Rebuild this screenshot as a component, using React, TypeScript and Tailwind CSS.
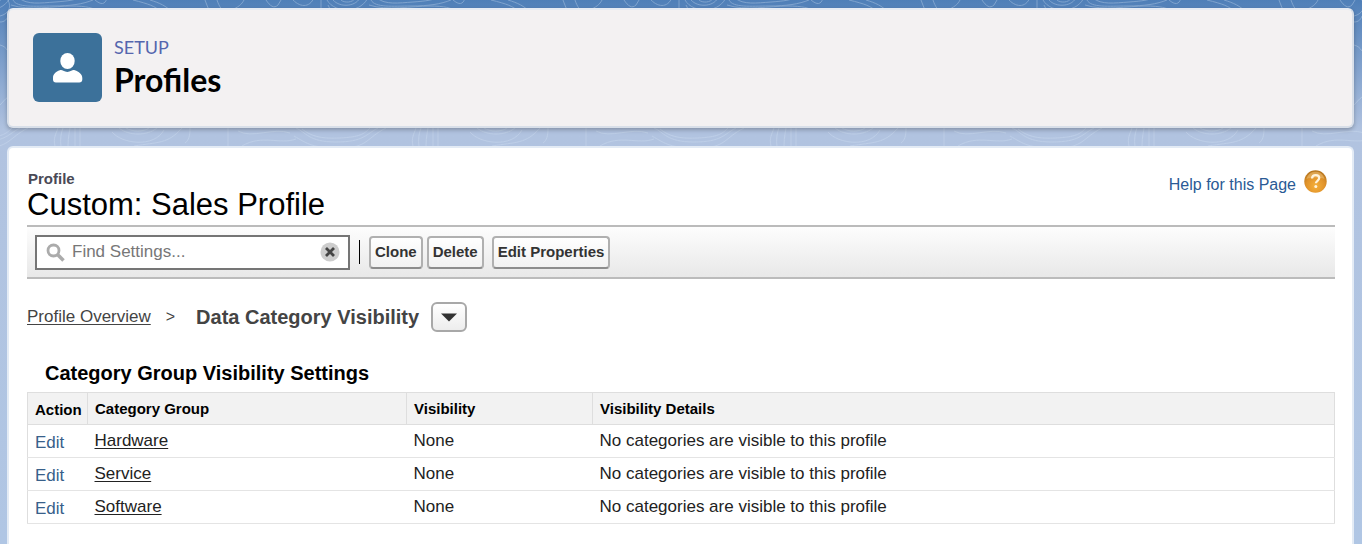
import type { ReactNode } from "react";

type CategoryRow = { group: string; visibility: string; details: string };

const rows: CategoryRow[] = [
  { group: "Hardware", visibility: "None", details: "No categories are visible to this profile" },
  { group: "Service", visibility: "None", details: "No categories are visible to this profile" },
  { group: "Software", visibility: "None", details: "No categories are visible to this profile" },
];

/* Contour-line texture drawn over the blue page gradient, repeating sideways. */
function ContourBackground() {
  return (
    <svg className="pointer-events-none absolute inset-0 h-full w-full" aria-hidden="true">
      <defs>
        <pattern id="contours" width="358" height="544" x="230" patternUnits="userSpaceOnUse">
          <g fill="none" stroke="#d5e4f5" strokeWidth="1" opacity="0.34">
            <path d="M36 0c4 6 8 9 12 5l3-5M63 0c8 8 18 8 22-5M91 0v10M98 5l3 6" />
            <path d="M97 0c8 14 36 14 42-5M103 0c7 8 24 7 28-4M111 0c3 3 12 3 14-2" />
            <path d="M141 0c4 8 22 6 40 6s30-2 40-6M147 -2c8 7 22 5 36 4s20-2 26-5M139 5c18 6 44 1 60 1s22 2 27 5" />
            <path d="M223 0c6 5 10 5 12-2M261 0c16 4 22 6 28 12M278 0c10 3 16 6 22 12" />
            <path d="M333 0c3 8 6 16 12 24M345 0c2 6 5 12 13 16" />
            <path d="M0 10c8-2 12-6 14-10M356 124v24" />
            <path d="M8 131c14 8 36-4 52 2M12 146c20-12 38-1 54-7M66 128c10 4 12 14 40 14s30-8 42-14" />
            <path d="M64 136c14 8 18 12 46 12s26-10 46-20M72 129c9 7 18 10 38 9s24-4 30-10" />
            <path d="M183 146c-2-8 1-12 3-18M189 147c-1-8 0-14 2-19M196 148c0-9 1-14 2-20M203 148v-20M208 148v-20" />
            <path d="M247 128c10 8 28 8 38 0M240 132c10 12 42 16 52-2M254 128c6 4 18 4 23 0M262 146c24-4 34-2 48-18M318 128c0 8-1 12-5 15" />
          </g>
        </pattern>
        <pattern id="side-contours" width="1354" height="150" y="0" patternUnits="userSpaceOnUse">
          <g fill="none" stroke="#d5e4f5" strokeWidth="1" opacity="0.34">
            <path d="M0 16c8-2 12-8 8-16M0 22c5 0 7-3 8-6M0 45c4 1 6 3 8 6M0 105c3-3 5-6 8-8" />
          </g>
        </pattern>
      </defs>
      <rect width="100%" height="150" fill="url(#contours)" />
      <rect width="100%" height="150" fill="url(#side-contours)" />
    </svg>
  );
}

function ToolbarButton({ children }: { children: ReactNode }) {
  return (
    <button
      type="button"
      className="h-[33px] rounded border-2 border-[#b0b0b0] border-b-[#8c8c8c] bg-linear-to-b from-white to-[#f1f1f1] px-1 text-[15px] leading-6 font-bold text-[#333]"
    >
      {children}
    </button>
  );
}

function PageHeader() {
  return (
    <header className="flex h-30 items-start gap-3 rounded-md border-2 border-[#d8dfe9] border-t-[#e6ebf3] bg-[#f3f1f2] px-6 pt-[23px] shadow-[0_2px_4px_rgba(0,0,0,0.25)]">
      <div className="flex size-[69px] items-center justify-center rounded-md bg-[#3c719a]">
        <svg width="30" height="30" viewBox="0 0 30 30" fill="#fff" aria-hidden="true">
          <ellipse cx="14.5" cy="8" rx="7.2" ry="8" />
          <path d="M6.800 17.200c1.500-.5 2.500 0 3.500.6 2.500 1.500 5.500 1.500 8 0 1-.6 2-1.100 3.500-.6C25.800 18.500 29.300 21 29.300 25v1.500c0 1.800-1.200 3-3 3H2.900c-1.800 0-2.900-1.200-2.900-3V25c0-4 2.800-6.500 6.800-7.800z" />
        </svg>
      </div>
      <div className="pt-1 font-[Lato,sans-serif]">
        <p className="text-lg leading-5 text-[#5566ae]">SETUP</p>
        <h1 className="pt-[3px] text-[32px] leading-10 font-bold text-black">Profiles</h1>
      </div>
    </header>
  );
}

function HelpLink() {
  return (
    <a href="#help" className="flex items-start gap-2 text-base text-[#2a5a95]">
      <span className="pt-1">Help for this Page</span>
      <svg width="23" height="23" viewBox="0 0 23 23" className="mt-px" aria-hidden="true">
        <defs>
          <radialGradient id="help-fill" cx="0.5" cy="0.7" r="0.65">
            <stop offset="0" stopColor="#f6b03a" />
            <stop offset="0.65" stopColor="#e0922a" />
            <stop offset="1" stopColor="#b9771f" />
          </radialGradient>
        </defs>
        <circle cx="11.500" cy="11.500" r="11.200" fill="url(#help-fill)" />
        <path d="M2.500 9C4 3.500 8 1.800 11.500 1.800S19 3.500 20.500 9c-5-2-13-2-18 0z" fill="#f3c880" opacity="0.5" />
        <path d="M8 8.500c.2-2.200 1.700-3.300 3.700-3.300 2.100 0 3.500 1.100 3.500 2.900 0 2.700-3.300 2.700-3.300 5.200" fill="none" stroke="#fff3dc" strokeWidth="2.300" />
        <circle cx="11.800" cy="16.600" r="1.500" fill="#fff3dc" />
      </svg>
    </a>
  );
}

function SearchBox() {
  return (
    <div className="flex h-[35px] w-[315px] items-center border-2 border-[#757575] bg-white pr-2 pl-[9px]">
      <svg width="19" height="19" viewBox="0 0 19 19" fill="none" stroke="#ababab" aria-hidden="true">
        <circle cx="7.500" cy="7.500" r="5.500" strokeWidth="2.800" />
        <path d="M11.500 11.500l6 6" strokeWidth="3.600" />
      </svg>
      <input
        type="text"
        aria-label="Find Settings"
        placeholder="Find Settings..."
        className="h-full min-w-0 flex-1 px-[7px] text-[17px] text-[#333] outline-none placeholder:text-[#777]"
      />
      <button type="button" aria-label="Clear search">
        <svg width="20" height="20" viewBox="0 0 20 20" className="block" aria-hidden="true">
          <circle cx="10" cy="10" r="9.500" fill="#cdcdcd" />
          <path d="M6 6l8 8M14 6l-8 8" stroke="#444" strokeWidth="2.800" />
        </svg>
      </button>
    </div>
  );
}

export default function App() {
  return (
    <div className="relative isolate min-h-screen bg-linear-to-b from-[#4f7fb8] from-0% via-[#b1c3e0] via-[130px] to-[#b0c6e4] to-100% font-['Liberation_Sans',Arial,sans-serif] text-[17px] leading-6 text-[#222]">
      <ContourBackground />
      <div className="relative flex min-h-screen flex-col gap-[18px] pt-2 pr-2 pl-[7px]">
        <PageHeader />
        <main className="flex-1 rounded-t-md border-2 border-b-0 border-[#e3ebf5] bg-white pt-[21px] pr-[17px] pl-[18px]">
          <div className="flex items-start justify-between pr-2">
            <div>
              <p className="pl-px text-[15px] leading-5 font-bold text-[#4a4a56]">Profile</p>
              <h2 className="text-[31px] leading-8 text-black">Custom: Sales Profile</h2>
            </div>
            <HelpLink />
          </div>

          <div className="mt-1 flex h-[54px] items-center border-y-2 border-[#bbb] bg-linear-to-b from-[#fdfdfd] to-[#e8e8e8] pl-2">
            <SearchBox />
            <span className="ml-[9px] h-6 w-px bg-black" />
            <div className="ml-[9px] flex gap-1">
              <ToolbarButton>Clone</ToolbarButton>
              <ToolbarButton>Delete</ToolbarButton>
              <div className="pl-1">
                <ToolbarButton>Edit Properties</ToolbarButton>
              </div>
            </div>
          </div>

          <nav aria-label="Breadcrumb" className="mt-[23px] flex items-center text-[#444]">
            <a href="#overview" className="underline underline-offset-2">Profile Overview</a>
            <span className="mx-[15px] text-base">&gt;</span>
            <span className="pl-[6px] text-xl font-bold">Data Category Visibility</span>
            <button
              type="button"
              aria-label="Choose a settings page"
              className="ml-3 flex h-[30px] w-9 items-center justify-center rounded-md border-2 border-[#a8a8a8] bg-linear-to-b from-white to-[#ededed]"
            >
              <svg width="16" height="9" viewBox="0 0 16 9" aria-hidden="true">
                <path d="M0 .5h16L8 8.500z" fill="#333" />
              </svg>
            </button>
          </nav>

          <h3 className="mt-[27px] pl-[18px] text-xl leading-7 font-bold text-black">Category Group Visibility Settings</h3>
          <table className="mt-[5px] w-full table-fixed border-collapse border border-[#dedede] text-left">
            <colgroup>
              <col className="w-[60px]" />
              <col className="w-[319px]" />
              <col className="w-[186px]" />
              <col />
            </colgroup>
            <thead>
              <tr className="h-8 bg-[#f2f2f2] text-[15px] text-black">
                <th className="border border-[#dedede] pt-[2px] pl-[7px]">Action</th>
                <th className="border border-[#dedede] pt-px pl-[7px]">Category Group</th>
                <th className="border border-[#dedede] pt-px pl-[7px]">Visibility</th>
                <th className="border border-[#dedede] pt-px pl-[7px]">Visibility Details</th>
              </tr>
            </thead>
            <tbody>
              {rows.map((row) => (
                <tr key={row.group} className="h-[33px] border-b border-[#e4e4e4]">
                  <td className="pt-[3px] pl-[7px]">
                    <a href={`#edit-${row.group.toLowerCase()}`} className="text-[#38608a]">Edit</a>
                  </td>
                  <td className="pl-[7px]">
                    <a href={`#${row.group.toLowerCase()}`} className="underline underline-offset-2">{row.group}</a>
                  </td>
                  <td className="pl-[7px]">{row.visibility}</td>
                  <td className="pl-[7px]">{row.details}</td>
                </tr>
              ))}
            </tbody>
          </table>
        </main>
      </div>
    </div>
  );
}
